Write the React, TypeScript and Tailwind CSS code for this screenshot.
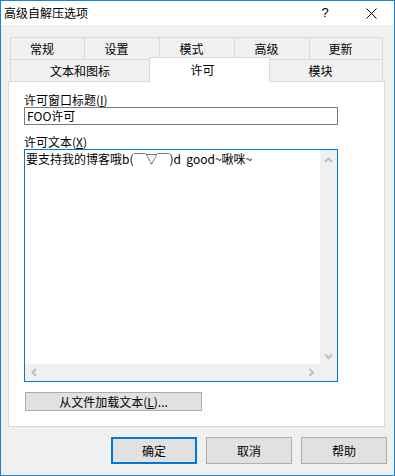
import React from "react";

const Chevron = ({ dir }: { dir: "up" | "down" | "left" | "right" }) => {
  const paths: Record<string, string> = {
    up: "M1 5 L4.5 1.5 L8 5",
    down: "M1 1.5 L4.5 5 L8 1.5",
    left: "M5 1 L1.5 4.5 L5 8",
    right: "M1.5 1 L5 4.5 L1.5 8",
  };
  const vertical = dir === "up" || dir === "down";
  return (
    <svg
      width={vertical ? 9 : 7}
      height={vertical ? 7 : 9}
      viewBox={vertical ? "0 0 9 7" : "0 0 7 9"}
      fill="none"
    >
      <path d={paths[dir]} stroke="#bfbfbf" strokeWidth="2" />
    </svg>
  );
};

const Tab = ({
  label,
  w,
  last,
  extra,
}: {
  label: string;
  w: string;
  last?: boolean;
  extra?: string;
}) => (
  <div
    className={`${w} h-full border-t border-l border-[#d9d9d9] bg-[#f0f0f0] flex items-center justify-center leading-[16px] ${
      last ? "border-r" : ""
    } ${extra ?? ""}`}
  >
    {label}
  </div>
);

export default function App() {
  return (
    <div className="w-[395px] h-[476px] border border-[#1a84d6] bg-[#f0f0f0] flex flex-col font-['Noto_Sans_CJK_SC','Liberation_Sans',sans-serif] text-[12px] text-black">
      {/* Title bar */}
      <div className="h-[24px] bg-white flex items-center shrink-0">
        <span className="pl-[3px] leading-[16px]">高级自解压选项</span>
        <div className="ml-auto flex items-center h-full">
          <span className="w-[46px] text-center text-[13px] leading-[16px] font-['Liberation_Sans',sans-serif]">
            ?
          </span>
          <span className="w-[46px] flex justify-center items-center">
            <svg width="11" height="11" viewBox="0 0 11 11">
              <path d="M0.5 0.5 L10.5 10.5 M10.5 0.5 L0.5 10.5" stroke="#000" strokeWidth="1" />
            </svg>
          </span>
        </div>
      </div>

      {/* Tabs & panel */}
      <div className="mt-[12px] ml-[7px] flex flex-col">
        <div className="ml-[2px] flex h-[22px]">
          <Tab label="常规" w="w-[74px]" extra="pr-[11px]" />
          <Tab label="设置" w="w-[75px]" extra="pr-[11px]" />
          <Tab label="模式" w="w-[75px]" extra="pr-[11px]" />
          <Tab label="高级" w="w-[75px]" extra="pr-[11px]" />
          <Tab label="更新" w="w-[74px]" last extra="pr-[11px]" />
        </div>
        <div className="ml-[2px] flex h-[22px] items-start">
          <Tab label="文本和图标" w="w-[139px]" />
          <div className="relative z-10 w-[121px] h-[25px] -mt-[2px] bg-white border-t border-l border-r border-[#d9d9d9] flex items-center justify-center pr-[14px] pb-[1px] leading-[16px]">
            许可
          </div>
          <div className="w-[113px] h-full border-t border-r border-[#d9d9d9] bg-[#f0f0f0] flex items-center justify-center pr-[11px] leading-[16px]">
            模块
          </div>
        </div>

        <div className="w-[377px] h-[346px] border border-[#d9d9d9] bg-white flex flex-col pl-[15px] pt-[10px]">
          <div className="leading-[15px] h-[15px]">
            许可窗口标题(<span className="underline">I</span>)
          </div>
          <div className="w-[314px] h-[18px] border border-[#7a7a7a] flex items-center pl-[2px] leading-[16px]">
            FOO许可
          </div>
          <div className="mt-[9px] leading-[15px] h-[15px]">
            许可文本(<span className="underline">X</span>)
          </div>
          <div className="w-[314px] h-[233px] border border-[#0078d7] flex flex-col">
            <div className="flex-1 flex min-h-0">
              <div className="flex-1 pl-[1px] pt-[1px] leading-[15px] whitespace-pre">
                要支持我的博客哦b(￣▽￣)d  good~啾咪~
              </div>
              <div className="w-[17px] bg-[#f0f0f0] flex flex-col items-center justify-between pt-[7px] pb-[4px]">
                <Chevron dir="up" />
                <Chevron dir="down" />
              </div>
            </div>
            <div className="h-[17px] flex">
              <div className="flex-1 bg-[#f0f0f0] flex items-center justify-between pl-[6px] pr-[5px]">
                <Chevron dir="left" />
                <Chevron dir="right" />
              </div>
              <div className="w-[17px] bg-[#f0f0f0]" />
            </div>
          </div>
          <div className="mt-[10px] ml-[1px] w-[177px] h-[19px] border border-[#adadad] bg-[#e1e1e1] flex items-center justify-center leading-[15px]">
            从文件加载文本(<span className="underline">L</span>)...
          </div>
        </div>
      </div>

      {/* Bottom buttons */}
      <div className="mt-[10px] flex justify-end gap-[9px] pr-[7px]">
        <div className="w-[86px] h-[27px] border-2 border-[#0078d7] bg-[#e1e1e1] flex items-center justify-center leading-[16px]">
          确定
        </div>
        <div className="w-[86px] h-[27px] border border-[#adadad] bg-[#e1e1e1] flex items-center justify-center leading-[16px]">
          取消
        </div>
        <div className="w-[86px] h-[27px] border border-[#adadad] bg-[#e1e1e1] flex items-center justify-center leading-[16px]">
          帮助
        </div>
      </div>
    </div>
  );
}
